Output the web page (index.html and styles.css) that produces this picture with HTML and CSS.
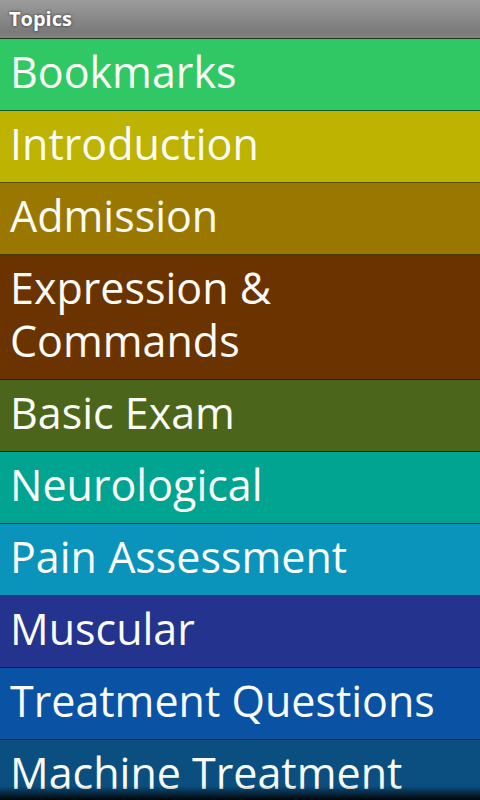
FILE: index.html
```html
<!DOCTYPE html>
<html lang="en">
<head>
    <meta charset="UTF-8">
    <meta name="viewport" content="width=device-width, initial-scale=1.0">
    <title>Topics</title>
    <link rel="stylesheet" href="styles.css">
</head>
<body>
    <div class="title-bar">Topics</div>
    <ul class="topics">
        <li class="topic bookmarks">Bookmarks</li>
        <li class="topic intro">Introduction</li>
        <li class="topic admission">Admission</li>
        <li class="topic expression">Expression &amp; Commands</li>
        <li class="topic basic">Basic Exam</li>
        <li class="topic neuro">Neurological</li>
        <li class="topic pain">Pain Assessment</li>
        <li class="topic muscular">Muscular</li>
        <li class="topic treatment">Treatment Questions</li>
        <li class="topic machine">Machine Treatment</li>
    </ul>
    <div class="bottom-fade"></div>
</body>
</html>
```

FILE: styles.css
```css
body {
    margin: 0;
    padding: 0;
    width: 480px;
    height: 800px;
    overflow: hidden;
    background-color: #000;
    font-family: "Open Sans", "Noto Sans", sans-serif;
    position: relative;
}
.title-bar {
    height: 39px;
    box-sizing: border-box;
    padding-left: 9px;
    line-height: 37px;
    font-size: 20px;
    font-weight: bold;
    color: #fff;
    text-shadow: 0 0 3px rgba(0, 0, 0, 0.7);
    background: linear-gradient(#9c9c9c, #7a7a7a 85%, #8a8282);
    border-bottom: 1px solid #1d3322;
}
.topics {
    list-style: none;
    margin: 0;
    padding: 0;
}
.topic {
    padding: 6px 10px 12px;
    font-size: 43px;
    line-height: 53px;
    color: #fbfbf5;
    border-bottom: 1px solid rgba(0, 0, 0, 0.55);
}
.bookmarks { background-color: #30c865; }
.intro { background-color: #bdb300; }
.admission { background-color: #9a7800; }
.expression { background-color: #6b3300; }
.basic { background-color: #4b661a; }
.neuro { background-color: #00a491; }
.pain { background-color: #0a94bb; }
.muscular { background-color: #24348e; }
.treatment { background-color: #0a52a3; }
.machine { background-color: #0a4f7f; }
.bottom-fade {
    position: absolute;
    left: 0;
    right: 0;
    bottom: 0;
    height: 14px;
    background: linear-gradient(rgba(0, 0, 0, 0), rgba(0, 0, 0, 0.95));
}
```
